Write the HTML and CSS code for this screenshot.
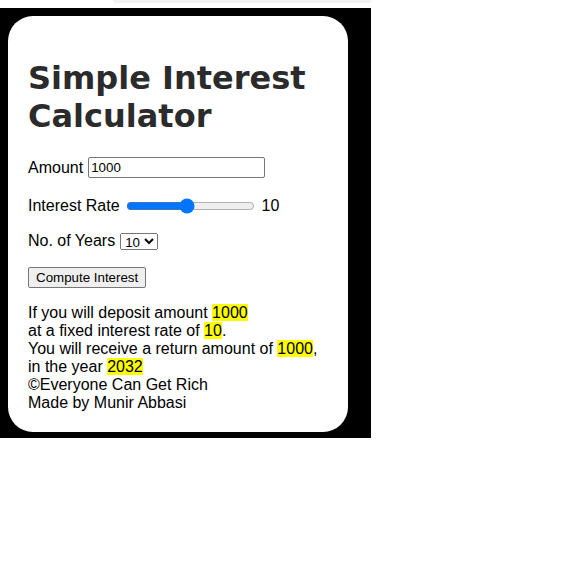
FILE: index.html
```html
<!DOCTYPE html>
<html>
<head>
<meta charset="utf-8">
<link rel="stylesheet" href="styles.css">
</head>
<body>
<div class="page">
  <div class="topbar"></div>
  <main class="frame">
    <section class="card">
      <h1 class="title">Simple Interest Calculator</h1>
      <div class="row row-amount">
        <label for="amount">Amount</label>
        <input id="amount" class="text-input" type="text" value="1000">
      </div>
      <div class="row row-rate">
        <label for="rate">Interest Rate</label>
        <input id="rate" class="range" type="range" min="1" max="20" value="10">
        <span class="rate-value">10</span>
      </div>
      <div class="row row-years">
        <label for="years">No. of Years</label>
        <select id="years" class="select">
          <option>10</option>
        </select>
      </div>
      <div class="row row-btn">
        <button class="btn" type="button">Compute Interest</button>
      </div>
      <p class="result">If you will deposit amount <mark>1000</mark><br>at a fixed interest rate of <mark>10</mark>.<br>You will receive a return amount of <mark>1000</mark>,<br>in the year <mark>2032</mark><br>©Everyone Can Get Rich<br>Made by Munir Abbasi</p>
    </section>
  </main>
</div>
</body>
</html>
```

FILE: styles.css
```css
html, body {
  margin: 0;
  padding: 0;
  background: #ffffff;
}
body {
  font-family: "Liberation Sans", Arial, sans-serif;
  font-size: 16px;
  color: #000;
}
.page {
  width: 371px;
}
.topbar {
  margin-left: 113px;
  height: 3px;
  background: #f1f1f4;
  border-bottom-left-radius: 4px;
}
.frame {
  display: block;
  margin-top: 5px;
  background: #000;
  padding: 8px 23px 6px 8px;
}
.card {
  background: #fff;
  border-radius: 25px;
  padding: 20px 20px 20px 20px;
}
.title {
  font-family: "DejaVu Sans", Verdana, sans-serif;
  font-weight: bold;
  font-size: 32px;
  line-height: 38px;
  color: #2b2b2b;
  margin: 23px 0 22px 0;
}
.row {
  display: flex;
  align-items: center;
}
.row-amount {
  height: 21px;
  margin-bottom: 19px;
}
.row-rate {
  height: 18px;
  margin-bottom: 17px;
}
.row-years {
  height: 18px;
  margin-bottom: 17px;
}
.row-btn {
  height: 21px;
  margin-bottom: 16px;
}
.text-input {
  box-sizing: border-box;
  width: 177px;
  height: 21px;
  margin: 0 0 0 5px;
  padding: 1px 2px;
  border: 1px solid #767676;
  border-radius: 2px;
  font-family: "Liberation Sans", Arial, sans-serif;
  font-size: 13.33px;
}
.range {
  width: 129px;
  margin: 0 6px 0 6px;
}
.rate-value {
  margin-left: 1px;
}
.select {
  box-sizing: border-box;
  width: 38px;
  height: 17px;
  margin-left: 5px;
  font-family: "Liberation Sans", Arial, sans-serif;
  font-size: 13.33px;
}
.btn {
  box-sizing: border-box;
  height: 21px;
  font-family: "Liberation Sans", Arial, sans-serif;
  font-size: 13.33px;
  padding: 1px 7px;
  border: 1px solid #767676;
  border-radius: 2px;
  background: #efefef;
  color: #000;
}
.result {
  margin: 0;
  line-height: 18px;
}
.result mark {
  background: #ffff00;
  color: #000;
}
```
